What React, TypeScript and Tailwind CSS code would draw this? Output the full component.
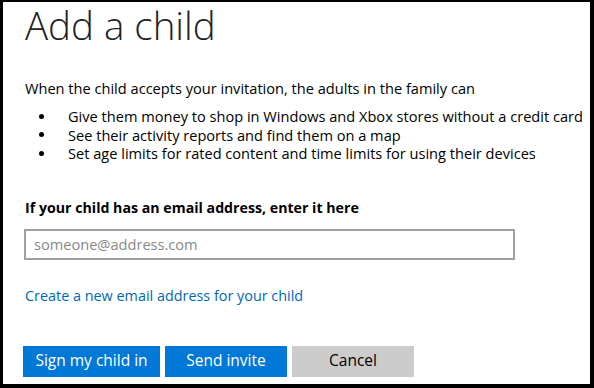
export default function App() {
  const items = [
    'Give them money to shop in Windows and Xbox stores without a credit card',
    'See their activity reports and find them on a map',
    'Set age limits for rated content and time limits for using their devices',
  ];

  return (
    <div className="w-[594px] h-[388px] bg-black pt-[2px] pl-[3px] pr-[4px] pb-[4px] font-['Open_Sans',sans-serif]">
      <div className="h-full bg-white pl-[22px] text-[#000]">
        <h1 className="text-[38.5px] font-light leading-[44px] pt-[1px] text-[#222]">Add a child</h1>
        <p className="mt-[31px] text-[14.6px] leading-[20px]">When the child accepts your invitation, the adults in the family can</p>
        <ul className="mt-[9px]">
          {items.map(item => (
            <li key={item} className="flex items-center text-[14.6px] leading-[18.5px] whitespace-nowrap">
              <span className="w-[43px] pl-[14px]">
                <span className="block w-[5px] h-[5px] rounded-full bg-black" />
              </span>
              {item}
            </li>
          ))}
        </ul>
        <h2 className="mt-[35px] text-[14.2px] font-bold leading-[20px]">If your child has an email address, enter it here</h2>
        <input
          type="text"
          placeholder="someone@address.com"
          className="mt-[11px] -ml-[1px] w-[491px] h-[31px] border-2 border-[#a0a0a0] px-[8px] text-[14.6px] placeholder:text-[#888] outline-none"
        />
        <a href="#" className="block mt-[26px] text-[14.4px] leading-[20px] text-[#0067b8]">Create a new email address for your child</a>
        <div className="flex gap-[5px] mt-[40px] -ml-[2px]">
          <button className="w-[137px] h-[31px] bg-[#0078d7] text-white text-[15.5px]">Sign my child in</button>
          <button className="w-[122px] h-[31px] bg-[#0078d7] text-white text-[15.5px]">Send invite</button>
          <button className="w-[122px] h-[31px] bg-[#cccccc] text-black text-[15.5px]">Cancel</button>
        </div>
      </div>
    </div>
  );
}
